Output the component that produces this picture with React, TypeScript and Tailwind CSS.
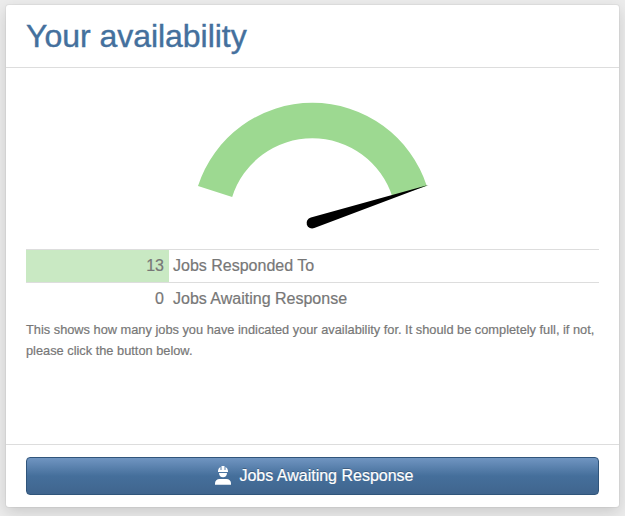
const rows = [
  { count: 13, label: "Jobs Responded To", fill: "bg-[#c9e9c3]" },
  { count: 0, label: "Jobs Awaiting Response", fill: "" },
];

function Gauge() {
  return (
    <svg className="block h-[181px] w-full" viewBox="0 0 573 181" aria-hidden="true">
      <path d="M172 117.9A120.3 120.3 0 0 1 400.8 117.9L366.4 129A84 84 0 0 0 206.2 129Z" fill="#9dd991" />
      <path d="M284.9 149.6L403 116.7L288.3 160A5.5 5.5 0 1 1 284.9 149.6Z" fill="#000" />
    </svg>
  );
}

function WorkerIcon() {
  return (
    <svg className="mb-0.5 h-5 w-4 shrink-0" viewBox="0 0 16 20" fill="#fff" aria-hidden="true">
      <path d="M3 7V6C3.2 4.2 4 2.7 5.5 2V5H6.5V1H9.5V5H10.5V2C12 2.7 12.8 4.2 13 6V7Z" />
      <path d="M4 8H12C12 10.7 10.3 12.3 8 12.3S4 10.7 4 8Z" />
      <path d="M0 19.8V18.2C0 15.6 2 14.3 4.5 14.1H11.5C14 14.3 16 15.6 16 18.2V19.8Z" />
    </svg>
  );
}

export default function App() {
  return (
    <main className="h-[516px] w-[625px] overflow-hidden bg-[#ececec] px-[6px] pt-[5px] font-['Liberation_Sans',Arial,sans-serif] text-[#777] [-webkit-text-stroke:0.2px_currentColor]">
      <section className="flex h-[502px] flex-col rounded-[3px] bg-white shadow-[0_0_0_1px_rgba(0,0,0,0.04),0_5px_15px_rgba(0,0,0,0.15)]">
        <header className="h-[63px] border-b border-[#ddd] px-5">
          <h1 className="pt-[11px] text-[32px] leading-[40px] tracking-[-0.03px] whitespace-nowrap text-[#44709d] [-webkit-text-stroke:0.4px_currentColor]">Your availability</h1>
        </header>
        <div className="flex-1 px-5">
          <Gauge />
          {rows.map((row) => (
            <div key={row.label} className="flex h-[33px] border-t border-[#ddd] text-base leading-8">
              <div className={`w-[143px] pr-[5px] text-right ${row.fill}`}>{row.count}</div>
              <div className="pl-1">{row.label}</div>
            </div>
          ))}
          <p className="pt-1 text-[12.8px] leading-[21px] whitespace-nowrap">
            This shows how many jobs you have indicated your availability for. It should be completely full, if not,
            <br />
            please click the button below.
          </p>
        </div>
        <footer className="h-[63px] border-t border-[#ddd] px-5 pt-3">
          <button className="flex h-[38px] w-full items-center justify-center gap-2 rounded-[4px] border border-[#30557b] bg-linear-to-b from-[#7095c1] via-[#456f9b] to-[#40658e] pl-1 text-base text-white [text-shadow:0_-1px_0_rgba(0,0,0,0.25)]">
            <WorkerIcon />
            Jobs Awaiting Response
          </button>
        </footer>
      </section>
    </main>
  );
}
